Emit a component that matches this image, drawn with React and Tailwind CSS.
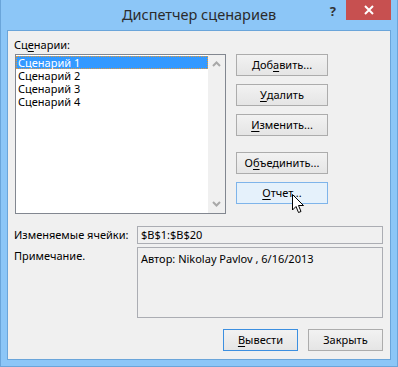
import React from 'react';

const font = { fontFamily: '"Noto Sans", "Open Sans", sans-serif' };

const Btn = ({ children, className = '', hover = false, primary = false }) => (
    <div
        className={
            'flex items-center justify-center h-[22px] text-[11px] text-black border whitespace-nowrap ' +
            (hover
                ? 'bg-[#e5f1fb] border-[#7eb4ea] '
                : primary
                ? 'bg-gradient-to-b from-[#f2f2f2] to-[#e5e5e5] border-[#3c8fe0] '
                : 'bg-gradient-to-b from-[#f2f2f2] to-[#e5e5e5] border-[#acacac] ') +
            className
        }
    >
        {children}
    </div>
);

const U = ({ children }) => <span className="underline underline-offset-2">{children}</span>;

export default function App() {
    const items = ['Сценарий 1', 'Сценарий 2', 'Сценарий 3', 'Сценарий 4'];

    return (
        <div style={font} className="w-[398px] h-[367px] bg-[#8cc6f7] border-x border-b border-[#6aa5da] flex flex-col px-[6px] overflow-hidden">
            {/* Title bar */}
            <div className="grid grid-cols-[1fr_auto_1fr] h-[30px] shrink-0 -mx-[6px]">
                <div />
                <div className="text-[14.5px] leading-[29px] text-[#2b2b2b]">Диспетчер сценариев</div>
                <div className="flex justify-end items-start pr-[6px]">
                    <span className="text-[13px] font-bold text-[#333] mt-[2px] mr-[10px]">?</span>
                    <div className="w-[45px] h-[20px] bg-[#c75050] flex items-center justify-center">
                        <svg width="10" height="10" viewBox="0 0 10 10">
                            <path d="M1 1 L9 9 M9 1 L1 9" stroke="white" strokeWidth="2" />
                        </svg>
                    </div>
                </div>
            </div>

            {/* Client area */}
            <div className="relative h-[330px] shrink-0 bg-[#f0f0f0] border border-[#6aa5da] flex flex-col text-[11px] text-black whitespace-nowrap">
                <div className="flex pl-[7px] pt-[5px]">
                    <div className="w-[211px] flex flex-col">
                        <div className="h-[17px] leading-[17px] -ml-[1px]">
                            Сц<U>е</U>нарии:
                        </div>
                        <div className="mt-[1px] h-[160px] border border-[#828790] bg-white flex">
                            <div className="flex-1 pt-[1px]">
                                {items.map((it, i) => (
                                    <div
                                        key={it}
                                        className={
                                            'h-[13px] flex items-center leading-none pl-[2px] ' +
                                            (i === 0 ? 'bg-[#3399ff] text-white outline-1 outline-dotted outline-[#e49a3a] -outline-offset-1' : '')
                                        }
                                    >
                                        {it}
                                    </div>
                                ))}
                            </div>
                            <div className="w-[17px] bg-[#f0f0f0] flex flex-col justify-between items-center py-[6px]">
                                <svg width="9" height="6" viewBox="0 0 9 6">
                                    <path d="M1 5 L4.5 1.5 L8 5" stroke="#a8a8a8" strokeWidth="2" fill="none" />
                                </svg>
                                <svg width="9" height="6" viewBox="0 0 9 6">
                                    <path d="M1 1 L4.5 4.5 L8 1" stroke="#a8a8a8" strokeWidth="2" fill="none" />
                                </svg>
                            </div>
                        </div>
                    </div>

                    <div className="w-[92px] ml-[10px] mt-[18px] flex flex-col">
                        <Btn>Доб<U>а</U>вить...</Btn>
                        <Btn className="mt-[8px]"><U>У</U>далить</Btn>
                        <Btn className="mt-[8px]"><U>И</U>зменить...</Btn>
                        <Btn className="mt-[16px]">О<U>б</U>ъединить...</Btn>
                        <Btn className="mt-[8px]" hover><U>О</U>тчет...</Btn>
                    </div>
                </div>

                <div className="flex items-center mt-[12px] pl-[6px] pr-[7px]">
                    <div className="w-[123px]">Изменяемые ячейки:</div>
                    <div className="flex-1 h-[18px] border border-[#abadb3] leading-[16px] pl-[3px]">$B$1:$B$20</div>
                </div>

                <div className="flex mt-[3px] pl-[6px] pr-[7px]">
                    <div className="w-[123px] pt-[1px]">Примечание.</div>
                    <div className="flex-1 h-[71px] border border-[#abadb3] pl-[3px] pt-[3px]">
                        Автор: Nikolay Pavlov , 6/16/2013
                    </div>
                </div>

                <div className="flex justify-end gap-[10px] pr-[7px] mt-[11px]">
                    <Btn primary className="w-[75px]"><U>В</U>ывести</Btn>
                    <Btn className="w-[75px]">Закрыть</Btn>
                </div>

                {/* mouse pointer */}
                <svg className="absolute left-[284px] top-[163px]" width="13" height="20" viewBox="0 0 13 20">
                    <path d="M0.5 0.5 L0.5 16 L4 12.5 L6.5 18.5 L9 17.5 L6.5 11.5 L11.5 11.5 Z" fill="white" stroke="black" strokeWidth="1" />
                </svg>
            </div>
        </div>
    );
}
